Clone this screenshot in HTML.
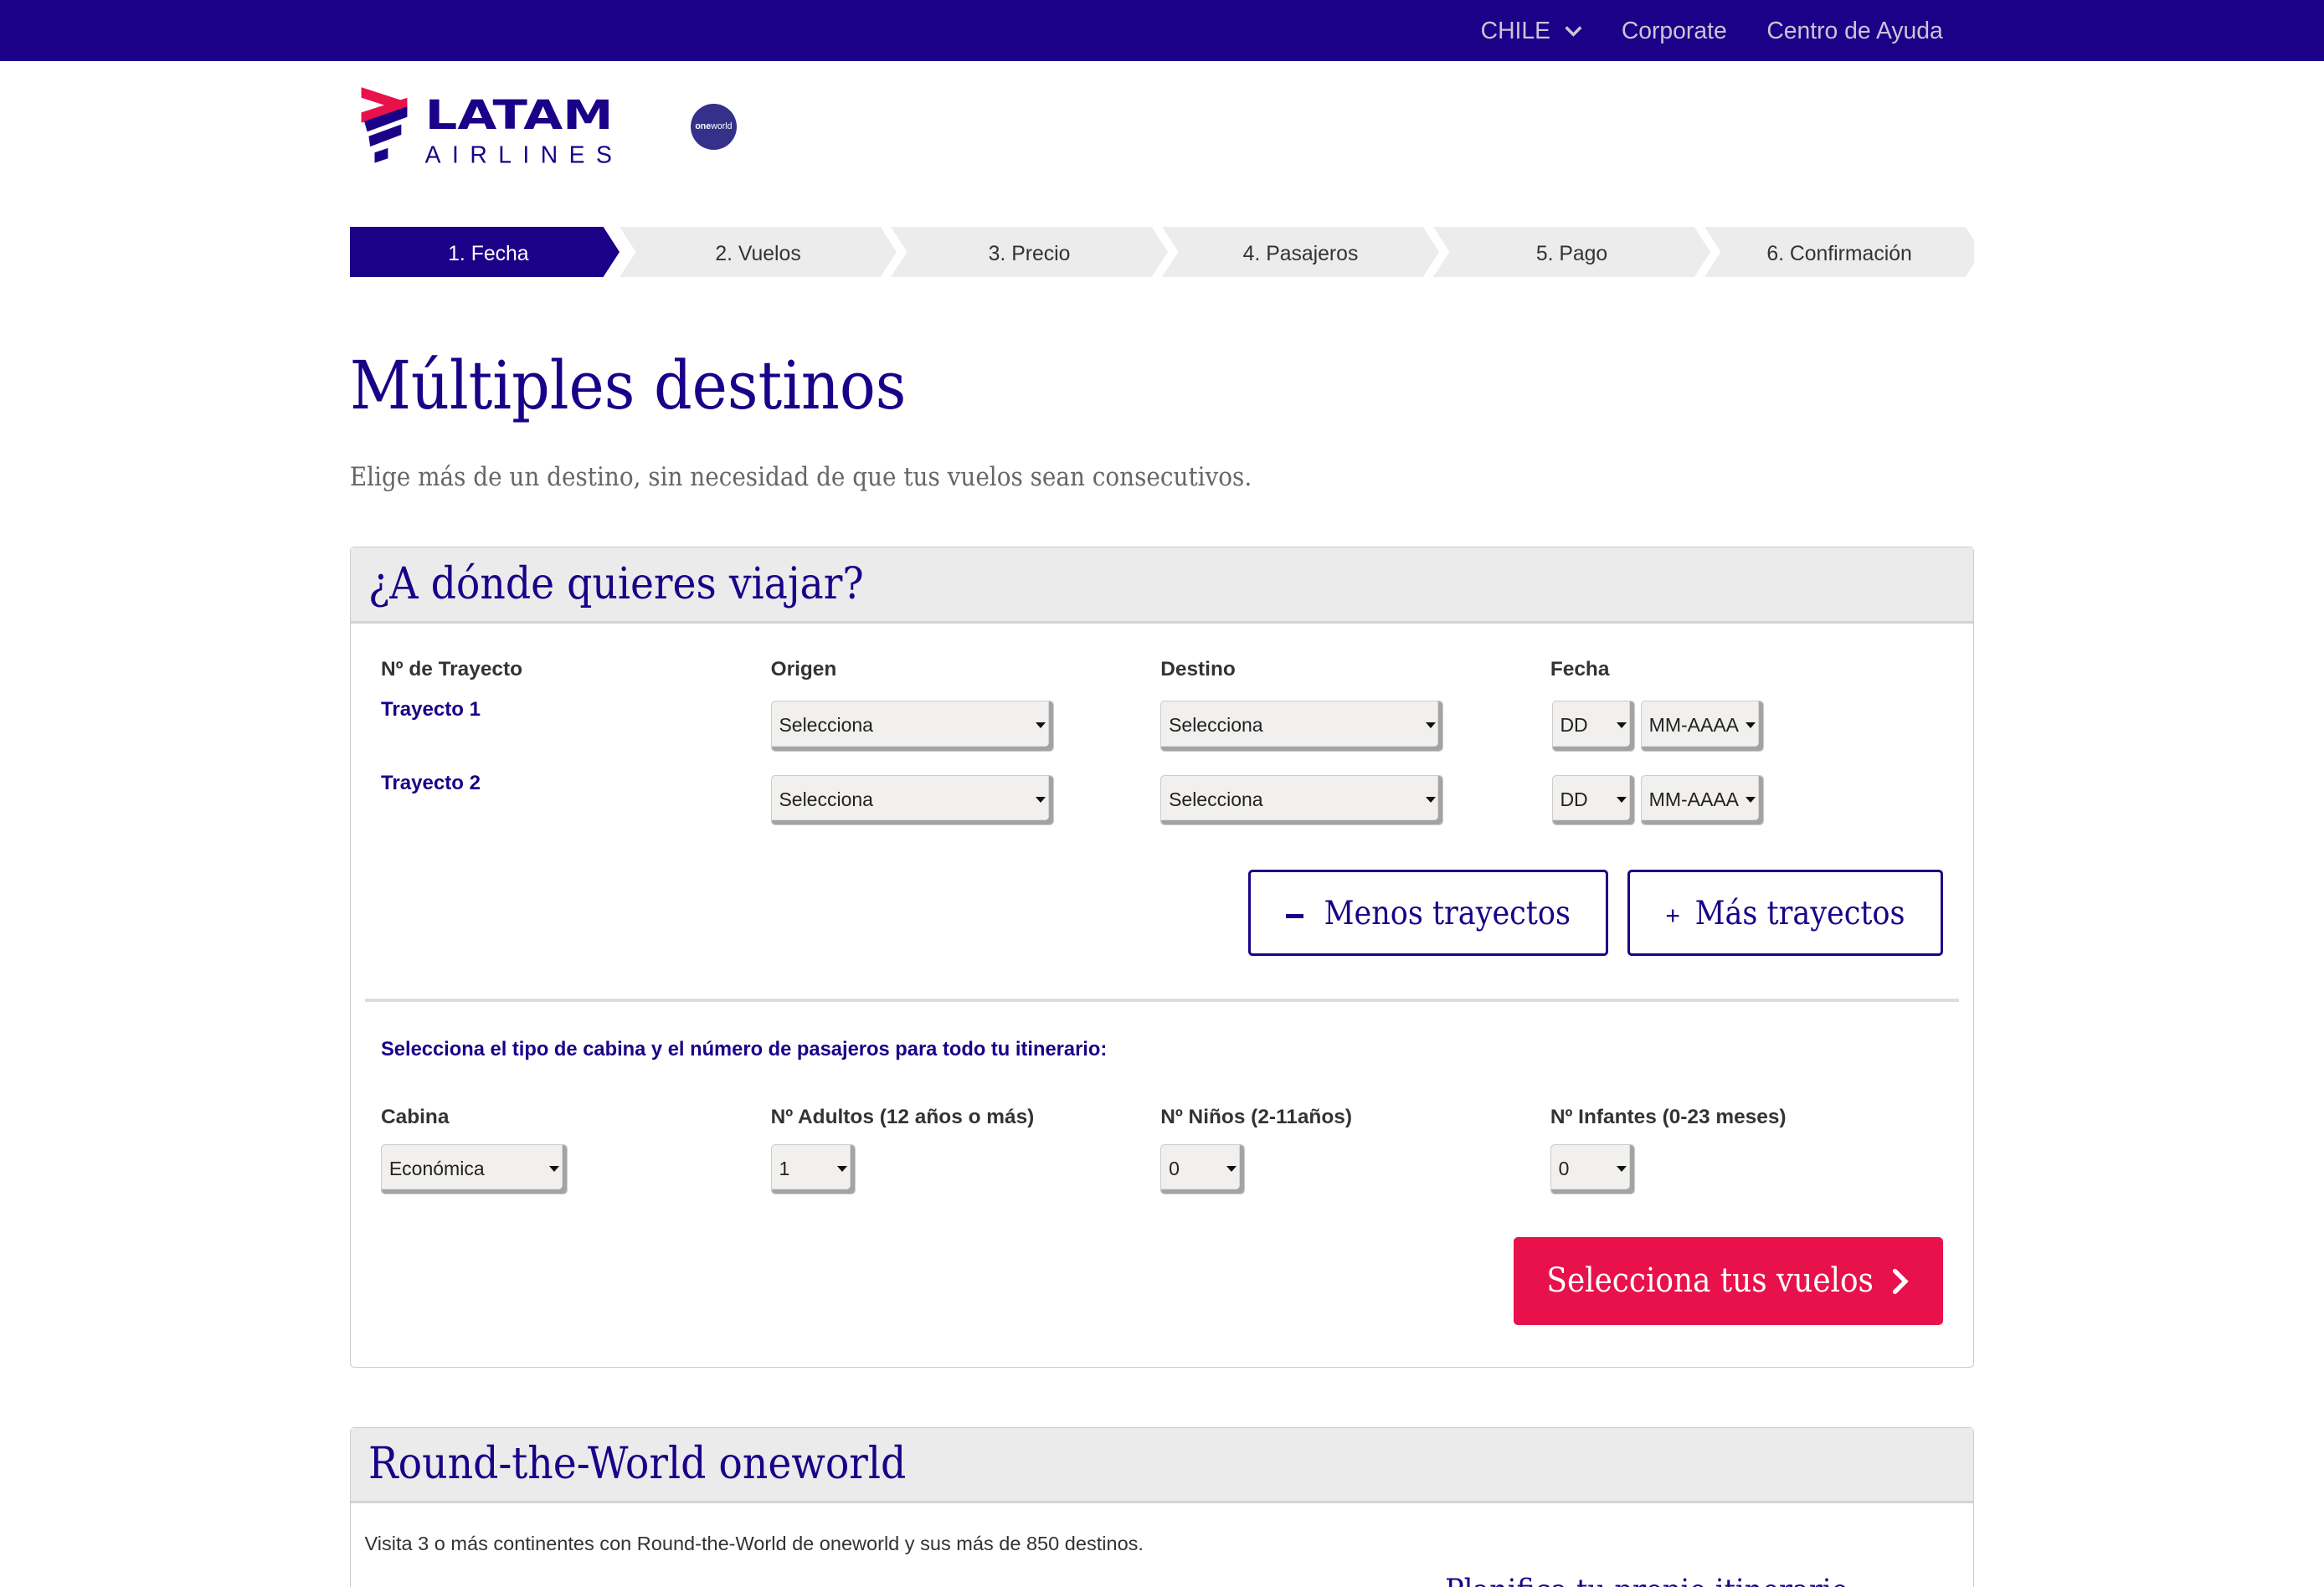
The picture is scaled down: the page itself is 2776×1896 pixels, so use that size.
<!DOCTYPE html>
<html><head><meta charset="utf-8">
<style>
*{box-sizing:border-box;margin:0;padding:0}
html,body{width:2776px;height:1896px;overflow:hidden;background:#fff}
#w{zoom:1.7704;width:1568px;height:1071px;position:relative;font-family:"Liberation Sans",sans-serif;color:#333}
.a{position:absolute}
.serif{font-family:"DejaVu Serif Condensed","DejaVu Serif",serif;font-stretch:condensed}
.top{left:0;top:0;width:1568px;height:41px;background:#1b0088}
.top span{position:absolute;top:12px;font-size:16px;color:#c9c6d6}
.step{top:153px;height:34px;width:187px;background:#ececec;clip-path:polygon(0 0,176px 0,187px 17px,176px 34px,0 34px,11px 17px);font-size:14px;line-height:37px;text-align:center;color:#333}
.step.on{background:#1b0088;color:#fff;clip-path:polygon(0 0,171px 0,182px 17px,171px 34px,0 34px)}
.panel{left:236px;width:1096px;border:1px solid #ccc;border-radius:3px;background:#fff}
.ph{height:51px;background:#ebebeb;border-bottom:2px solid #d3d3d3;font-size:29.7px;color:#1b0088;padding:7px 0 0 12px}
.lbl{font-size:13.8px;font-weight:bold;color:#333}
.tr{font-size:13.6px;font-weight:bold;color:#1b0088}
.sel{height:34px;background:#f1f0ee;border:1px solid #ccc;border-radius:3px;box-shadow:inset -3px -3px 0 #a3a3a3;font-size:13px;line-height:32px;padding-left:5px;color:#222}
.sel:after{content:"";position:absolute;right:5px;top:14px;border:3.5px solid transparent;border-top:4px solid #111;border-bottom:0}
.btn{height:58px;border:2px solid #1b0088;border-radius:3px;font-size:22px;color:#1b0088;text-align:center;line-height:56px}
</style></head><body><div id="w">
<div class="a top">
<span style="left:999px">CHILE <svg width="14" height="10" viewBox="0 0 14 10" style="margin-left:4px"><path d="M2 2l5 5 5-5" stroke="#c9c6d6" stroke-width="2" fill="none"/></svg></span>
<span style="left:1094px">Corporate</span>
<span style="left:1192px">Centro de Ayuda</span>
</div>
<svg class="a" style="left:242px;top:56px" width="180" height="58" viewBox="0 0 180 58">
<path d="M2 3l31 10v7L2 10z" fill="#e8114b"/>
<path d="M2 20l31-10v7L2 27z" fill="#e8114b"/>
<path d="M4 26l29-10v7L6 33z" fill="#1b0088"/>
<path d="M7 36l22-8v7L8 43z" fill="#1b0088"/>
<path d="M11 47l9-3v7l-9 3z" fill="#1b0088"/>
<text x="45" y="31" font-family="DejaVu Sans" font-weight="bold" font-size="27" fill="#1b0088" textLength="127" lengthAdjust="spacingAndGlyphs">LATAM</text>
<text x="45" y="54" font-family="Liberation Sans" font-size="16" fill="#1b0088" letter-spacing="7.6">AIRLINES</text>
</svg>
<div class="a" style="left:466px;top:70px;width:31px;height:31px;border-radius:50%;background:#35308a;color:#fff;font-size:6px;line-height:31px;text-align:center"><b>one</b>world</div>
<div class="a step on" style="left:236px">1. Fecha</div>
<div class="a step" style="left:418px">2. Vuelos</div>
<div class="a step" style="left:601px">3. Precio</div>
<div class="a step" style="left:784px">4. Pasajeros</div>
<div class="a step" style="left:967px">5. Pago</div>
<div class="a step" style="left:1150px;width:182px">6. Confirmación</div>
<div class="a serif" style="left:236px;top:234px;font-size:44.8px;color:#1b0088;white-space:nowrap">Múltiples destinos</div>
<div class="a serif" style="left:236px;top:312px;font-size:17.5px;color:#666;white-space:nowrap">Elige más de un destino, sin necesidad de que tus vuelos sean consecutivos.</div>

<div class="a panel" style="top:369px;height:554px">
<div class="ph serif">¿A dónde quieres viajar?</div>
</div>
<div class="a lbl" style="left:257px;top:444px">Nº de Trayecto</div>
<div class="a lbl" style="left:520px;top:444px">Origen</div>
<div class="a lbl" style="left:783px;top:444px">Destino</div>
<div class="a lbl" style="left:1046px;top:444px">Fecha</div>
<div class="a tr" style="left:257px;top:471px">Trayecto 1</div>
<div class="a tr" style="left:257px;top:521px">Trayecto 2</div>
<div class="a sel" style="left:520px;top:473px;width:191px">Selecciona</div>
<div class="a sel" style="left:783px;top:473px;width:191px">Selecciona</div>
<div class="a sel" style="left:1047px;top:473px;width:56px">DD</div>
<div class="a sel" style="left:1107px;top:473px;width:83px">MM-AAAA</div>
<div class="a sel" style="left:520px;top:523px;width:191px">Selecciona</div>
<div class="a sel" style="left:783px;top:523px;width:191px">Selecciona</div>
<div class="a sel" style="left:1047px;top:523px;width:56px">DD</div>
<div class="a sel" style="left:1107px;top:523px;width:83px">MM-AAAA</div>
<div class="a btn serif" style="left:842px;top:587px;width:243px"><span style="display:inline-block;width:12px;height:3px;background:#1b0088;vertical-align:middle;margin-right:14px"></span>Menos trayectos</div>
<div class="a btn serif" style="left:1098px;top:587px;width:213px"><span style="font-size:17px;margin-right:10px;font-family:'Liberation Sans'">+</span>Más trayectos</div>
<div class="a" style="left:246px;top:674px;width:1076px;height:2px;background:#ddd"></div>
<div class="a tr" style="left:257px;top:701px;font-size:13.4px">Selecciona el tipo de cabina y el número de pasajeros para todo tu itinerario:</div>
<div class="a lbl" style="left:257px;top:746px">Cabina</div>
<div class="a lbl" style="left:520px;top:746px">Nº Adultos (12 años o más)</div>
<div class="a lbl" style="left:783px;top:746px">Nº Niños (2-11años)</div>
<div class="a lbl" style="left:1046px;top:746px">Nº Infantes (0-23 meses)</div>
<div class="a sel" style="left:257px;top:772px;width:126px">Económica</div>
<div class="a sel" style="left:520px;top:772px;width:57px">1</div>
<div class="a sel" style="left:783px;top:772px;width:57px">0</div>
<div class="a sel" style="left:1046px;top:772px;width:57px">0</div>
<div class="a serif" style="left:1021px;top:835px;width:290px;height:59px;background:#e8114b;border-radius:3px;color:#fff;font-size:22.5px;line-height:59px;text-align:center">Selecciona tus vuelos <svg width="12" height="18" viewBox="0 0 12 18" style="margin-left:6px;vertical-align:-2px"><path d="M2 2l7 7-7 7" stroke="#fff" stroke-width="3" fill="none" stroke-linecap="round"/></svg></div>

<div class="a panel" style="top:963px;height:140px">
<div class="ph serif">Round-the-World oneworld</div>
</div>
<div class="a" style="left:246px;top:1034px;font-size:13.3px;color:#333">Visita 3 o más continentes con Round-the-World de oneworld y sus más de 850 destinos.</div>
<div class="a serif" style="left:975px;top:1061px;font-size:21px;color:#1b0088;white-space:nowrap">Planifica tu propio itinerario</div>
</div></body></html>
